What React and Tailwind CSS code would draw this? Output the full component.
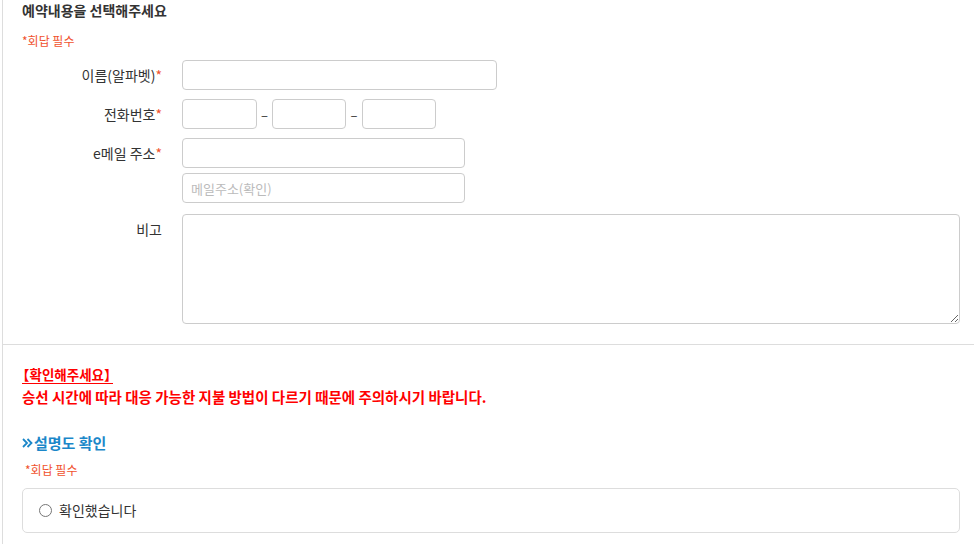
import React from 'react';

const font = { fontFamily: '"Noto Sans CJK KR", "Noto Sans", sans-serif' };

const Req = () => <span className="text-[#f0522d]">*</span>;

const Row = ({ label, children, className = '' }) => (
  <div className={`flex items-start ${className}`}>
    <div className="w-[162px] shrink-0 text-right text-[14px] leading-[30px] text-[#333]">{label}</div>
    <div className="ml-[20px] flex-1">{children}</div>
  </div>
);

const inputCls = 'h-[30px] rounded-[4px] border border-[#cccccc] bg-white px-2 text-[13px] outline-none placeholder:text-[#bbbbbb]';

const App = () => {
  return (
    <div className="h-[544px] w-[974px] overflow-hidden bg-white pl-[2px]" style={font}>
      <div className="h-full border-l border-[#dddddd]">
        <div className="pb-[20px] pr-[14px]">
          <h2 className="pl-[19px] text-[14px] font-bold leading-[20px] text-[#333]">예약내용을 선택해주세요</h2>
          <p className="mt-[13px] pl-[19px] text-[12px] leading-[16px] text-[#f0522d]">*회답 필수</p>

          <div className="mt-[11px] -ml-[3px]">
            <Row label={<>이름(알파벳)<Req /></>}>
              <input className={`${inputCls} w-[315px]`} />
            </Row>
            <Row label={<>전화번호<Req /></>} className="mt-[9px]">
              <div className="flex items-center">
                <input className={`${inputCls} w-[75px]`} />
                <span className="mx-[3px] w-[9px] text-center text-[13px] leading-none text-[#333]">–</span>
                <input className={`${inputCls} w-[74px]`} />
                <span className="mx-[3px] w-[10px] text-center text-[13px] leading-none text-[#333]">–</span>
                <input className={`${inputCls} w-[74px]`} />
              </div>
            </Row>
            <Row label={<>e메일 주소<Req /></>} className="mt-[9px]">
              <div className="flex flex-col gap-[5px]">
                <input className={`${inputCls} w-[283px]`} />
                <input className={`${inputCls} w-[283px]`} placeholder="메일주소(확인)" />
              </div>
            </Row>
            <Row label="비고" className="mt-[11px]">
              <textarea className="block h-[110px] w-full rounded-[4px] border border-[#cccccc] bg-white p-2 text-[13px] outline-none" />
            </Row>
          </div>
        </div>

        <div className="border-t border-[#dddddd] pl-[19px] pr-[14px] pt-[21px]">
          <p className="text-[13.5px] font-bold leading-[16px] text-[#ff0000]">
            <span className="inline-block whitespace-nowrap border-b-[1.5px] border-[#ff0000] pb-[1px] pr-[1px]">
              <span className="-ml-[6px]">【</span>확인해주세요<span className="-mr-[6px]">】</span>
            </span>
          </p>
          <p className="mt-[3px] text-[14.5px] font-bold leading-[20px] text-[#ff0000]">
            승선 시간에 따라 대응 가능한 지불 방법이 다르기 때문에 주의하시기 바랍니다.
          </p>

          <h3 className="mt-[26px] flex items-center text-[15px] font-bold leading-[20px] text-[#1b87c9]">
            <svg width="11" height="10" viewBox="0 0 11 10" className="mr-[1px]">
              <path d="M1 1l4 4-4 4M5.5 1l4 4-4 4" fill="none" stroke="#1b87c9" strokeWidth="1.8" />
            </svg>
            설명도 확인
          </h3>
          <p className="mt-[9px] pl-[3px] text-[12px] leading-[16px] text-[#f0522d]">*회답 필수</p>

          <div className="mt-[10px] flex h-[45px] items-center rounded-[5px] border border-[#dddddd] pl-[16px]">
            <label className="flex items-center text-[14px] text-[#333]">
              <input type="radio" name="confirm" className="h-[13px] w-[13px]" />
              <span className="ml-[7px]">확인했습니다</span>
            </label>
          </div>
        </div>
      </div>
    </div>
  );
};

export default App;
